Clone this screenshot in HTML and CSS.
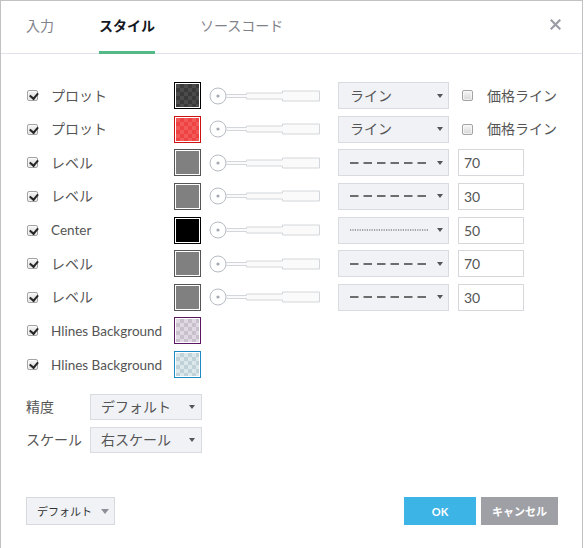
FILE: index.html
```html
<!DOCTYPE html>
<html lang="ja">
<head>
<meta charset="utf-8">
<link rel="stylesheet" href="styles.css">
</head>
<body>
<div class="dialog">
  <div class="header">
    <div class="tabs">
      <div class="tab">入力</div>
      <div class="tab active">スタイル</div>
      <div class="tab">ソースコード</div>
    </div>
    <div class="close"><svg width="11" height="11" viewBox="0 0 11 11"><path d="M1.5 1.5L9.5 9.5M9.5 1.5L1.5 9.5" stroke="#9a9da5" stroke-width="2.2" stroke-linecap="square"/></svg></div>
  </div>

  <div class="rows">
    <div class="row">
      <div class="cb-cell"><span class="cb checked"></span></div>
      <div class="label">プロット</div>
      <div class="swatch sw-dark"><span></span></div>
      <div class="slider"><svg width="111" height="18" viewBox="0 0 111 18"><path d="M17.5 7.5H37.5V6H73.5V4H110.5V14H73.5V12H37.5V10.5H17.5" fill="#fafafa" stroke="#d3d6da"/><circle cx="9" cy="9" r="8" fill="#fff" stroke="#b7bbc3"/><circle cx="9" cy="9" r="1.6" fill="#a5a9b1"/></svg></div>
      <div class="select"><span>ライン</span><i class="arrow"></i></div>
      <div class="cb-after"><span class="cb"></span></div>
      <div class="after-label">価格ライン</div>
    </div>
    <div class="row">
      <div class="cb-cell"><span class="cb checked"></span></div>
      <div class="label">プロット</div>
      <div class="swatch sw-red"><span></span></div>
      <div class="slider"><svg width="111" height="18" viewBox="0 0 111 18"><path d="M17.5 7.5H37.5V6H73.5V4H110.5V14H73.5V12H37.5V10.5H17.5" fill="#fafafa" stroke="#d3d6da"/><circle cx="9" cy="9" r="8" fill="#fff" stroke="#b7bbc3"/><circle cx="9" cy="9" r="1.6" fill="#a5a9b1"/></svg></div>
      <div class="select"><span>ライン</span><i class="arrow"></i></div>
      <div class="cb-after"><span class="cb"></span></div>
      <div class="after-label">価格ライン</div>
    </div>
    <div class="row">
      <div class="cb-cell"><span class="cb checked"></span></div>
      <div class="label">レベル</div>
      <div class="swatch sw-gray"><span></span></div>
      <div class="slider"><svg width="111" height="18" viewBox="0 0 111 18"><path d="M17.5 7.5H37.5V6H73.5V4H110.5V14H73.5V12H37.5V10.5H17.5" fill="#fafafa" stroke="#d3d6da"/><circle cx="9" cy="9" r="8" fill="#fff" stroke="#b7bbc3"/><circle cx="9" cy="9" r="1.6" fill="#a5a9b1"/></svg></div>
      <div class="select"><svg class="line" width="78" height="4" viewBox="0 0 78 4"><line x1="0" y1="2" x2="78" y2="2" stroke="#6d6d6d" stroke-width="2" stroke-dasharray="8.5 5"/></svg><i class="arrow"></i></div>
      <div class="num">70</div>
    </div>
    <div class="row">
      <div class="cb-cell"><span class="cb checked"></span></div>
      <div class="label">レベル</div>
      <div class="swatch sw-gray"><span></span></div>
      <div class="slider"><svg width="111" height="18" viewBox="0 0 111 18"><path d="M17.5 7.5H37.5V6H73.5V4H110.5V14H73.5V12H37.5V10.5H17.5" fill="#fafafa" stroke="#d3d6da"/><circle cx="9" cy="9" r="8" fill="#fff" stroke="#b7bbc3"/><circle cx="9" cy="9" r="1.6" fill="#a5a9b1"/></svg></div>
      <div class="select"><svg class="line" width="78" height="4" viewBox="0 0 78 4"><line x1="0" y1="2" x2="78" y2="2" stroke="#6d6d6d" stroke-width="2" stroke-dasharray="8.5 5"/></svg><i class="arrow"></i></div>
      <div class="num">30</div>
    </div>
    <div class="row">
      <div class="cb-cell"><span class="cb checked"></span></div>
      <div class="label latin">Center</div>
      <div class="swatch sw-black"><span></span></div>
      <div class="slider"><svg width="111" height="18" viewBox="0 0 111 18"><path d="M17.5 7.5H37.5V6H73.5V4H110.5V14H73.5V12H37.5V10.5H17.5" fill="#fafafa" stroke="#d3d6da"/><circle cx="9" cy="9" r="8" fill="#fff" stroke="#b7bbc3"/><circle cx="9" cy="9" r="1.6" fill="#a5a9b1"/></svg></div>
      <div class="select"><svg class="line" width="78" height="4" viewBox="0 0 78 4"><line x1="0" y1="2" x2="78" y2="2" stroke="#555" stroke-width="1.2" stroke-dasharray="1.2 1.2"/></svg><i class="arrow"></i></div>
      <div class="num">50</div>
    </div>
    <div class="row">
      <div class="cb-cell"><span class="cb checked"></span></div>
      <div class="label">レベル</div>
      <div class="swatch sw-gray"><span></span></div>
      <div class="slider"><svg width="111" height="18" viewBox="0 0 111 18"><path d="M17.5 7.5H37.5V6H73.5V4H110.5V14H73.5V12H37.5V10.5H17.5" fill="#fafafa" stroke="#d3d6da"/><circle cx="9" cy="9" r="8" fill="#fff" stroke="#b7bbc3"/><circle cx="9" cy="9" r="1.6" fill="#a5a9b1"/></svg></div>
      <div class="select"><svg class="line" width="78" height="4" viewBox="0 0 78 4"><line x1="0" y1="2" x2="78" y2="2" stroke="#6d6d6d" stroke-width="2" stroke-dasharray="8.5 5"/></svg><i class="arrow"></i></div>
      <div class="num">70</div>
    </div>
    <div class="row">
      <div class="cb-cell"><span class="cb checked"></span></div>
      <div class="label">レベル</div>
      <div class="swatch sw-gray"><span></span></div>
      <div class="slider"><svg width="111" height="18" viewBox="0 0 111 18"><path d="M17.5 7.5H37.5V6H73.5V4H110.5V14H73.5V12H37.5V10.5H17.5" fill="#fafafa" stroke="#d3d6da"/><circle cx="9" cy="9" r="8" fill="#fff" stroke="#b7bbc3"/><circle cx="9" cy="9" r="1.6" fill="#a5a9b1"/></svg></div>
      <div class="select"><svg class="line" width="78" height="4" viewBox="0 0 78 4"><line x1="0" y1="2" x2="78" y2="2" stroke="#6d6d6d" stroke-width="2" stroke-dasharray="8.5 5"/></svg><i class="arrow"></i></div>
      <div class="num">30</div>
    </div>
    <div class="row">
      <div class="cb-cell"><span class="cb checked"></span></div>
      <div class="label latin">Hlines Background</div>
      <div class="swatch sw-purple"><span></span></div>
    </div>
    <div class="row">
      <div class="cb-cell"><span class="cb checked"></span></div>
      <div class="label latin">Hlines Background</div>
      <div class="swatch sw-blue"><span></span></div>
    </div>
  </div>

  <div class="props">
    <div class="prop">
      <div class="prop-label">精度</div>
      <div class="select prop-select"><span>デフォルト</span><i class="arrow"></i></div>
    </div>
    <div class="prop">
      <div class="prop-label">スケール</div>
      <div class="select prop-select"><span>右スケール</span><i class="arrow"></i></div>
    </div>
  </div>

  <div class="footer">
    <div class="btn-default"><span>デフォルト</span><i class="arrow-lg"></i></div>
    <div class="actions">
      <div class="btn btn-ok">OK</div>
      <div class="btn btn-cancel">キャンセル</div>
    </div>
  </div>
</div>
</body>
</html>
```

FILE: styles.css
```css
* { box-sizing: border-box; }
html, body { margin: 0; padding: 0; background: #fff; }
body {
  font-family: "Lato", "Noto Sans CJK JP", sans-serif;
  font-size: 14px;
  color: #555;
}
.dialog {
  width: 583px;
  height: 548px;
  border: 1px solid #c2c2c2;
  border-bottom: none;
  background: #fff;
}
.header {
  height: 53px;
  border-bottom: 1px solid #e0e3eb;
  display: flex;
  justify-content: space-between;
  align-items: stretch;
  padding-left: 25px;
  padding-right: 21px;
}
.tabs { display: flex; gap: 45px; }
.tab {
  position: relative;
  font-size: 14px;
  line-height: 50px;
  color: #7f828b;
}
.tab.active { color: #131722; font-weight: bold; }
.tab.active::after {
  content: "";
  position: absolute;
  left: 0; right: 0; bottom: -1px;
  height: 3px;
  background: #53b987;
}
.close { padding-top: 18px; }
.close svg { display: block; }

.rows {
  padding: 28px 0 0 26px;
  display: flex;
  flex-direction: column;
  gap: 6.625px;
}
.row { display: flex; align-items: center; height: 27px; }
.cb-cell { width: 24px; display: flex; align-items: center; }
.cb {
  display: block;
  width: 11px; height: 11px;
  border: 1px solid #a3a3a3;
  border-radius: 2px;
  background: linear-gradient(#f6f6f6, #d8d8d8);
  box-shadow: inset 0 0 0 1px rgba(255,255,255,0.6);
  position: relative;
}
.cb.checked::after {
  content: "";
  position: absolute;
  left: 2.5px; top: 0px;
  width: 3.5px; height: 6px;
  border-right: 2.5px solid #262626;
  border-bottom: 2.5px solid #262626;
  transform: rotate(40deg);
}
.label { width: 123px; white-space: nowrap; line-height: 20px; }
.label.latin { font-size: 13.5px; }
.swatch {
  width: 27px; height: 27px;
  border: 1px solid #555;
  padding: 1px;
  background: #fff;
}
.swatch span { display: block; width: 100%; height: 100%; }
.sw-dark { border-color: #000; }
.sw-dark span { background: conic-gradient(#3a3a3a 25%, #4b4b4b 0 50%, #3a3a3a 0 75%, #4b4b4b 0) 0 0 / 8px 8px; }
.sw-red { border-color: #cc1111; }
.sw-red span { background: conic-gradient(#ef4242 25%, #f25a5a 0 50%, #ef4242 0 75%, #f25a5a 0) 0 0 / 8px 8px; }
.sw-gray { border-color: #555; }
.sw-gray span { background: #808080; }
.sw-black { border-color: #000; }
.sw-black span { background: #000; }
.sw-purple { border-color: #5a1660; }
.sw-purple span { background: conic-gradient(#c9c0cd 25%, #e0d9e3 0 50%, #c9c0cd 0 75%, #e0d9e3 0) 0 0 / 8px 8px; }
.sw-blue { border-color: #1d8ac7; }
.sw-blue span { background: conic-gradient(#bfd2d7 25%, #dbe7ea 0 50%, #bfd2d7 0 75%, #dbe7ea 0) 0 0 / 8px 8px; }

.slider { margin-left: 8px; width: 111px; height: 18px; }
.slider svg { display: block; }

.select {
  margin-left: 18px;
  width: 111px; height: 27px;
  background: #f0f2f5;
  border: 1px solid #d8dbe0;
  display: flex;
  align-items: center;
  justify-content: space-between;
  padding: 0 5px 0 11px;
  line-height: 20px;
}
.select .line { display: block; }
.arrow {
  display: block;
  width: 0; height: 0;
  border-top: 4px solid #555;
  border-left: 3.5px solid transparent;
  border-right: 3.5px solid transparent;
}
.cb-after { margin-left: 13px; }
.after-label { margin-left: 14px; white-space: nowrap; line-height: 20px; }
.num {
  margin-left: 9px;
  width: 66px; height: 27px;
  border: 1px solid #d6d8dc;
  background: #fff;
  padding-left: 5px;
  line-height: 25px;
  font-size: 14px;
}

.props {
  margin-top: 16px;
  padding-left: 25px;
  display: flex;
  flex-direction: column;
  gap: 7px;
}
.prop { display: flex; align-items: center; height: 26px; }
.prop-label { width: 64px; white-space: nowrap; line-height: 20px; }
.select.prop-select {
  margin-left: 0;
  width: 112px; height: 26px;
  padding: 0 6px 0 10px;
}

.footer {
  margin-top: 44px;
  padding: 0 24px 0 25px;
  display: flex;
  justify-content: space-between;
  align-items: center;
}
.btn-default {
  width: 89px; height: 28px;
  background: #f0f2f5;
  border: 1px solid #d6d9de;
  display: flex;
  align-items: center;
  padding-left: 10px;
  gap: 9px;
  font-size: 11px;
  color: #333;
}
.arrow-lg {
  display: block;
  width: 0; height: 0;
  border-top: 5px solid #8d9098;
  border-left: 4px solid transparent;
  border-right: 4px solid transparent;
}
.actions { display: flex; gap: 5px; }
.btn {
  height: 28px;
  display: flex;
  align-items: center;
  justify-content: center;
  color: #fff;
  font-weight: bold;
  font-size: 11px;
}
.btn-ok { width: 72px; background: #3cb4e5; }
.btn-cancel { width: 77px; background: #9ea0a6; }
```
